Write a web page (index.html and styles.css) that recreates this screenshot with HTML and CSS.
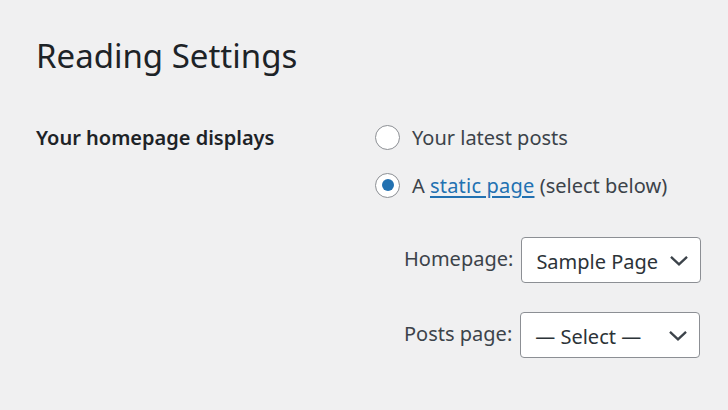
FILE: index.html
```html
<!DOCTYPE html>
<html lang="en">
<head>
<meta charset="utf-8">
<title>Reading Settings</title>
<link rel="stylesheet" href="styles.css">
</head>
<body>
<div class="wrap">
  <h1 class="title">Reading Settings</h1>
  <div class="form-table">
    <div class="th">Your homepage displays</div>
    <div class="td">
      <div class="radio-row">
        <span class="radio"></span>
        <span class="radio-label">Your latest posts</span>
      </div>
      <div class="radio-row">
        <span class="radio checked"></span>
        <span class="radio-label">A <a class="link" href="#">static page</a> (select below)</span>
      </div>
      <div class="page-options">
        <div class="opt-row">
          <span class="opt-label">Homepage:</span>
          <div class="select">
            <span class="select-text">Sample Page</span>
            <svg class="chevron" width="18" height="10" viewBox="0 0 18 10"><path d="M1.8 1.6 L9 8.4 L16.2 1.6" fill="none" stroke="#3c434a" stroke-width="2.3" stroke-linecap="square"/></svg>
          </div>
        </div>
        <div class="opt-row">
          <span class="opt-label">Posts page:</span>
          <div class="select">
            <span class="select-text">— Select —</span>
            <svg class="chevron" width="18" height="10" viewBox="0 0 18 10"><path d="M1.8 1.6 L9 8.4 L16.2 1.6" fill="none" stroke="#3c434a" stroke-width="2.3" stroke-linecap="square"/></svg>
          </div>
        </div>
      </div>
    </div>
  </div>
</div>
</body>
</html>
```
FILE: styles.css
```css
html, body {
  margin: 0;
  padding: 0;
  background: #f0f0f1;
}
body {
  font-family: "Noto Sans", "Open Sans", sans-serif;
  color: #3c434a;
  width: 728px;
  height: 410px;
  overflow: hidden;
}
.wrap {
  padding: 36px 0 0 36px;
}
.title {
  margin: 0;
  font-size: 33px;
  line-height: 40px;
  font-weight: 400;
  color: #1d2327;
}
.form-table {
  margin-top: 37px;
  display: grid;
  grid-template-columns: 339px 1fr;
}
.th {
  padding-top: 11px;
  font-size: 20px;
  line-height: 28px;
  font-weight: 600;
  color: #1d2327;
}
.td {
  display: flex;
  flex-direction: column;
}
.radio-row {
  display: flex;
  align-items: center;
  height: 48px;
}
.radio {
  box-sizing: border-box;
  width: 25px;
  height: 25px;
  border: 1px solid #8c8f94;
  border-radius: 50%;
  background: #fff;
  display: flex;
  align-items: center;
  justify-content: center;
  margin-right: 12px;
  flex: none;
}
.radio.checked::before {
  content: "";
  width: 12px;
  height: 12px;
  border-radius: 50%;
  background: #2271b1;
}
.radio-label {
  font-size: 20px;
  line-height: 28px;
  padding-top: 1px;
}
.link {
  color: #2271b1;
  text-decoration: underline;
  text-underline-offset: 3px;
  letter-spacing: 0.2px;
}
.page-options {
  margin-top: 28px;
  padding-left: 29px;
  display: flex;
  flex-direction: column;
  gap: 29px;
}
.opt-row {
  display: flex;
  align-items: flex-start;
}
.opt-label {
  font-size: 20px;
  line-height: 28px;
  padding-top: 8px;
  margin-right: 8px;
}
.select {
  box-sizing: border-box;
  width: 180px;
  height: 46px;
  border: 1px solid #8c8f94;
  border-radius: 4px;
  background: #fff;
  display: flex;
  align-items: center;
  justify-content: space-between;
  padding: 3px 12px 0 14px;
}
.select-text {
  font-size: 20px;
  line-height: 28px;
  color: #2c3338;
}
.chevron {
  display: block;
  margin-top: -2px;
}
```
